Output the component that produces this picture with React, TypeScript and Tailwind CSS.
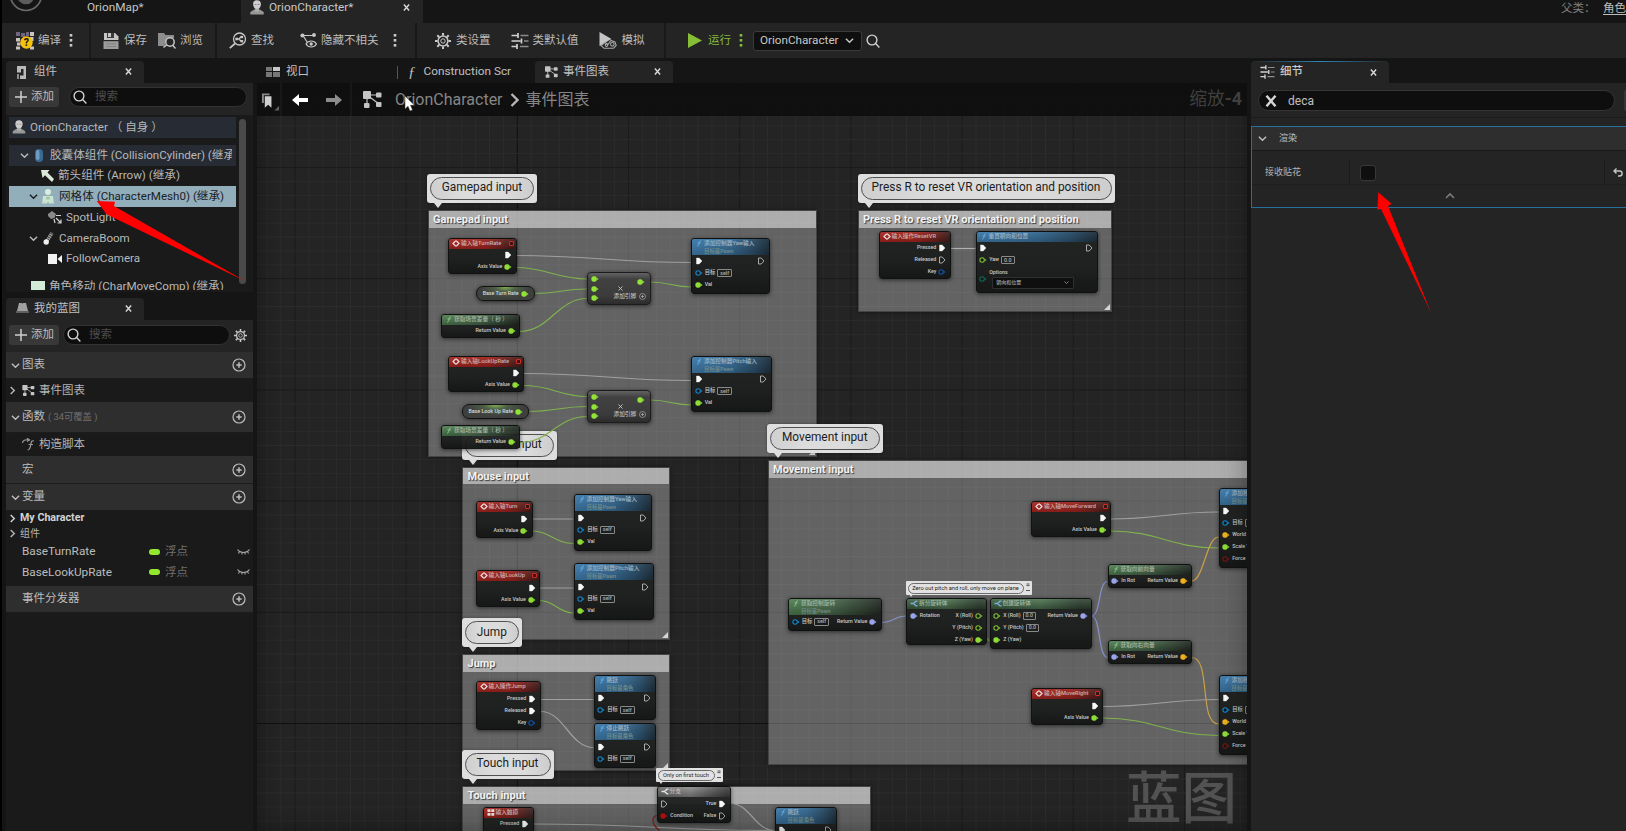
import React from "react";

const FONT = "font-[Roboto,'Noto_Sans_CJK_SC',sans-serif]";

/* ---------- icons ---------- */

type IconProps = { className?: string };

const Close = ({ className = "size-[7px]" }: IconProps) => (
  <svg viewBox="0 0 8 8" className={className} fill="none" stroke="#d6d6d6" strokeWidth="1.6">
    <path d="M1 .5l6 7M7 .5L1 7.500" />
  </svg>
);

const Chevron = ({ className = "size-[9px]", dir = "down" }: IconProps & { dir?: "down" | "right" | "up" }) => (
  <svg viewBox="0 0 10 10" className={className} fill="none" stroke="currentColor" strokeWidth="1.6">
    {dir === "down" && <path d="M1 3l4 4 4-4" />}
    {dir === "right" && <path d="M3 1l4 4-4 4" />}
    {dir === "up" && <path d="M1 7l4-4 4 4" />}
  </svg>
);

const Search = ({ className = "size-[14px]" }: IconProps) => (
  <svg viewBox="0 0 14 14" className={className} fill="none" stroke="#d0d0d0" strokeWidth="1.4">
    <circle cx="6" cy="6" r="4.9" />
    <path d="M9.6 9.6l3.8 3.8" />
  </svg>
);

const Gear = ({ className = "size-4" }: IconProps) => (
  <svg viewBox="0 0 16 16" className={className} fill="none" stroke="#c8c8c8">
    <circle cx="8" cy="8" r="4.9" strokeWidth="1.5" />
    <circle cx="8" cy="8" r="2.2" strokeWidth="1" />
    <path
      strokeWidth="2"
      d="M8 0v2.6M8 13.4V16M0 8h2.6M13.4 8H16M2.3 2.3l1.9 1.9M11.8 11.8l1.9 1.9M2.3 13.7l1.9-1.9M11.8 4.2l1.9-1.9"
    />
  </svg>
);

const Person = ({ className = "w-[14px] h-[15px]" }: IconProps) => (
  <svg viewBox="0 0 14 15" className={className}>
    <path d="M7 .2c2.700 0 4 1.700 3.900 4C10.800 6.700 9.200 9.500 7 9.500S3.200 6.700 3.100 4.200C3 1.900 4.300.2 7 .2z" fill="#cdcdcd" />
    <path d="M.3 14.500V12l4-2.500h5.400l4 2.500v2.500z" fill="#989898" />
    <path d="M5.200 8.500h3.600v3H5.200z" fill="#b0b0b0" />
    <path d="M4.500 4h2v.9h-2zM7.500 4h2v.9h-2z" fill="#8a8a8a" />
  </svg>
);

const GraphIcon = ({ className = "w-[14px] h-[12px]" }: IconProps) => (
  <svg viewBox="0 0 19 17" className={className} fill="#c4c4c4">
    <path d="M4 4l12 9M4 4h12M4 4v10" stroke="#c4c4c4" strokeWidth="1.2" />
    <rect x="0" y="0" width="8" height="8" rx="1" />
    <rect x="13" y="1.500" width="5.500" height="5" rx="1" />
    <rect x="1" y="12" width="5.500" height="5" rx="1" />
    <rect x="13" y="11" width="5.500" height="5" rx="1" />
  </svg>
);

const Sliders = ({ className = "w-[18px] h-4" }: IconProps) => (
  <svg viewBox="0 0 18 16" className={className} fill="none" stroke="#cfcfcf">
    <path strokeWidth="1.700" d="M.5 2.500h6M.5 8h9M.5 13.500h5M7 0v5M10.500 5.500v5M6 11v5" />
    <path strokeWidth="1.300" stroke="#8b8b8b" d="M9.500 2.500h8M13 8h4.500M9 13.500h8.500" />
  </svg>
);

const Dots = ({ className = "text-[#c8c8c8]" }: IconProps) => (
  <svg viewBox="0 0 4 13" className={`h-[13px] w-1 ${className}`} fill="currentColor">
    <rect x="0.700" y="0" width="2.600" height="2.600" />
    <rect x="0.700" y="5" width="2.600" height="2.600" />
    <rect x="0.700" y="10" width="2.600" height="2.600" />
  </svg>
);

const PlusCircle = ({ className = "size-[14px]" }: IconProps) => (
  <svg viewBox="0 0 14 14" className={className} fill="none" stroke="#bdbdbd" strokeWidth="1.200">
    <circle cx="7" cy="7" r="6" />
    <path d="M7 4.300v5.400M4.300 7h5.400" strokeWidth="1.500" />
  </svg>
);

const CompileIcon = () => (
  <svg viewBox="0 0 18 18" className="size-[18px]">
    <g fill="#6f6580">
      <rect x="0" y="0" width="4" height="4" />
      <rect x="5" y="1" width="4" height="4" />
      <rect x="10" y="0" width="3" height="4" />
    </g>
    <g fill="#c9c4bd">
      <rect x="14" y="0" width="4" height="4" />
      <rect x="14" y="5" width="3.500" height="4" />
      <rect x="0" y="6" width="4" height="3.500" />
      <rect x="1" y="10.500" width="3.500" height="3" />
      <rect x="0" y="14.500" width="4" height="3" />
      <rect x="14" y="14.500" width="4" height="3" />
    </g>
    <circle cx="10.500" cy="10.500" r="6.200" fill="#f4c20f" />
    <text x="10.500" y="14.300" textAnchor="middle" fontSize="10.500" fontWeight="800" fontFamily="Roboto, sans-serif" fill="#1c1600">
      ?
    </text>
  </svg>
);

const SaveIcon = () => (
  <svg viewBox="0 0 16 16" className="size-4">
    <path d="M1 0h11l3.500 3.500V7H1z" fill="#c4c4c4" />
    <path d="M4 0h7v5H4z" fill="#3a3a3a" />
    <path d="M5 0h3v4H5z" fill="#c4c4c4" />
    <path d="M.5 8.200h15V16H.5z" fill="#9c9c9c" />
    <path d="M3 10.500h10v.8H3zM3 13h10v.8H3z" fill="#7a7a7a" />
  </svg>
);

const BrowseIcon = () => (
  <svg viewBox="0 0 18 17" className="h-[17px] w-[18px]">
    <path d="M0 1h6l1.500 2H16v3H9L6.500 14H0z" fill="#8d8d8d" />
    <circle cx="12" cy="10" r="4.200" fill="#242424" stroke="#c4c4c4" strokeWidth="1.500" />
    <path d="M14.500 13l3 3.500M8.800 12.600L5.500 15.500" stroke="#c4c4c4" strokeWidth="1.500" />
  </svg>
);

const FindIcon = () => (
  <svg viewBox="0 0 18 17" className="h-[17px] w-[18px]" fill="none" stroke="#c8c8c8" strokeWidth="1.300">
    <circle cx="10.500" cy="7" r="6" />
    <path d="M6 11.500L.8 16.200" strokeWidth="1.700" />
    <path d="M8 7h2l2-2.200M10 7l2 2.300" />
    <g fill="#c8c8c8" stroke="none">
      <rect x="6.300" y="5.700" width="2.600" height="2.600" />
      <rect x="11.500" y="3.800" width="2.600" height="2.400" />
      <rect x="11.500" y="8" width="2.600" height="2.400" />
    </g>
  </svg>
);

const HideIcon = () => (
  <svg viewBox="0 0 17 15" className="h-[15px] w-[17px]" fill="none" stroke="#c8c8c8" strokeWidth="1.200">
    <path d="M3 2.500h11M4 4l3 5" />
    <circle cx="2.500" cy="2.500" r="2.100" fill="#c8c8c8" stroke="none" />
    <circle cx="14" cy="2" r="1.900" fill="#c8c8c8" stroke="none" />
    <path d="M6 11c2.500-4 8-4 10.500 0-2.500 4-8 4-10.500 0z" />
    <circle cx="11.200" cy="11" r="1.700" fill="#c8c8c8" stroke="none" />
  </svg>
);

const SimulateIcon = () => (
  <svg viewBox="0 0 18 17" className="h-[17px] w-[18px]">
    <path d="M.5 0l12 7-12 7z" fill="#c4c4c4" />
    <g fill="#242424" stroke="#a8a8a8" strokeWidth="1.100">
      <path d="M2 13.500l4-3 3 2 3-4 4 1.500 1.200 3.500-2.700 2.800H5z" />
      <circle cx="13.300" cy="12.300" r="1.800" />
      <circle cx="7.500" cy="13.300" r="1.200" />
    </g>
  </svg>
);

const FuncIcon = ({ className = "text-[17px]" }: IconProps) => (
  <span className={`font-['Liberation_Serif',serif] italic leading-none ${className}`}>ƒ</span>
);

/* ---------- top bars ---------- */

function TabBar() {
  return (
    <div className="flex h-[23px] shrink-0 overflow-hidden bg-[#151515]">
      <div className="flex w-[239px]">
        <svg viewBox="0 0 34 12" className="ml-[7px] h-3 w-[34px]" fill="none">
          <circle cx="17" cy="-5" r="15.500" stroke="#6a6a6a" strokeWidth="1.700" />
          <path d="M8-2c2 5 8 7 9 6 3 1 7-2 8-6z" fill="#5d5d5d" />
        </svg>
        <span className="ml-[44px] text-[11.800px] leading-[14px] text-[#c4c4c4]">OrionMap*</span>
      </div>
      <div className="flex w-[182px] items-start bg-[#242424]">
        <Person className="ml-[9px] mt-0 h-[15px] w-[14px]" />
        <span className="ml-[5px] text-[11.800px] leading-[14px] text-[#c8c8c8]">OrionCharacter*</span>
        <Close className="ml-auto mr-[13px] mt-[4px] size-[7px]" />
      </div>
      <div className="ml-auto flex gap-[11px] text-[11.5px] leading-[16px] text-[#808080]">
        <span className="w-[31px] whitespace-nowrap">父类：</span>
        <span className="w-[23px] whitespace-nowrap text-[#bdbdbd] underline underline-offset-2">角色</span>
      </div>
    </div>
  );
}

const Sep = () => <div className="h-full w-[2px] shrink-0 bg-[#191919]" />;

function Tool({ icon, label, className }: { icon: React.ReactNode; label: string; className: string }) {
  return (
    <div className={`flex shrink-0 items-center ${className}`}>
      {icon}
      <span className="whitespace-nowrap">{label}</span>
    </div>
  );
}

function Toolbar() {
  return (
    <div className="flex h-[35px] shrink-0 items-center bg-[#242424] text-[11.5px] text-[#bcbcbc]">
      <div className="flex h-full w-[87px] items-center">
        <Tool className="ml-[14px] gap-1" icon={<CompileIcon />} label="编译" />
        <Dots className="ml-[8px] text-[#c8c8c8]" />
      </div>
      <Sep />
      <div className="flex h-full w-[124px] items-center">
        <Tool className="ml-[12px] gap-[5px]" icon={<SaveIcon />} label="保存" />
        <Tool className="ml-[11px] gap-1" icon={<BrowseIcon />} label="浏览" />
      </div>
      <Sep />
      <div className="flex h-full w-[198px] items-center">
        <Tool className="ml-[12px] gap-[4px]" icon={<FindIcon />} label="查找" />
        <Tool className="ml-[26px] gap-[4px]" icon={<HideIcon />} label="隐藏不相关" />
        <Dots className="ml-[14px] text-[#c8c8c8]" />
      </div>
      <Sep />
      <div className="flex h-full w-[247px] items-center">
        <Tool className="ml-[18px] gap-[5px]" icon={<Gear />} label="类设置" />
        <Tool className="ml-[20px] gap-1" icon={<Sliders />} label="类默认值" />
        <Tool className="ml-[20px] gap-[5px]" icon={<SimulateIcon />} label="模拟" />
      </div>
      <Sep />
      <div className="flex h-full items-center">
        <svg viewBox="0 0 14 15" className="ml-[22px] h-[15px] w-[14px]">
          <path d="M0 0l14 7.500L0 15z" fill="#86bf36" />
        </svg>
        <span className="ml-[6px] text-[#86b83c]">运行</span>
        <Dots className="ml-[8px] text-[#86b83c]" />
        <div className="ml-[10px] flex h-[20px] w-[109px] items-center rounded-[3px] border border-[#3b3b3b] bg-[#0f0f0f] pl-[6px] text-[11.700px] text-[#c8c8c8]">
          OrionCharacter
          <Chevron className="ml-auto mr-[7px] size-[9px]" />
        </div>
        <Search className="ml-[4px] size-[14px]" />
      </div>
    </div>
  );
}

/* ---------- left column ---------- */

function PanelTab({ icon, label }: { icon: React.ReactNode; label: string }) {
  return (
    <div className="flex h-[22px] w-[138px] shrink-0 items-center rounded-t bg-[#242424] text-[11.5px] text-[#c0c0c0]">
      <span className="ml-[9px] flex w-[14px] justify-center">{icon}</span>
      <span className="ml-[5px]">{label}</span>
      <Close className="mb-px ml-auto mr-[12px] size-[7px]" />
    </div>
  );
}

function AddButton() {
  return (
    <div className="flex h-5 w-[50px] shrink-0 items-center rounded-[3px] bg-[#383838] text-[11.5px] text-[#bdbdbd]">
      <svg viewBox="0 0 12 12" className="ml-[6px] mr-1 size-[12px]" stroke="#cfcfcf" strokeWidth="1.500">
        <path d="M6 0v12M0 6h12" />
      </svg>
      添加
    </div>
  );
}

function SearchBox({ className }: IconProps) {
  return (
    <div className={`flex h-5 items-center rounded-full border border-[#323232] bg-[#0e0e0e] text-[11.5px] text-[#4c4c4c] ${className}`}>
      <Search className="ml-[3px] mr-[8px] size-[14px]" />
      搜索
    </div>
  );
}

function TreeRow({
  pad,
  arrow,
  icon,
  label,
  tone = "text-[#b8b8b8]",
}: {
  pad: string;
  arrow?: boolean;
  icon: React.ReactNode;
  label: string;
  tone?: string;
}) {
  return (
    <div className={`flex h-[20.8px] shrink-0 items-center overflow-hidden whitespace-nowrap text-[11.600px] ${pad} ${tone}`}>
      {arrow && <Chevron className="mr-[3px] size-[9px] shrink-0" />}
      <span className="mr-[4px] flex w-[14px] shrink-0 justify-center">{icon}</span>
      <span className="overflow-hidden">{label}</span>
    </div>
  );
}

const CapsuleIcon = () => (
  <svg viewBox="0 0 8 13" className="h-[13px] w-2">
    <rect x="0" y="0" width="8" height="13" rx="4" fill="#3a6991" />
    <rect x="1" y="1" width="3.500" height="10" rx="1.700" fill="#6b9cc2" />
  </svg>
);
const ArrowIcon = () => (
  <svg viewBox="0 0 13 12" className="h-3 w-[13px]">
    <path d="M0 0h8.500L6.500 2.500l6.500 6.500L11 12 4 5.300 1.500 8z" fill="#dbe8da" />
  </svg>
);
const SkeletonIcon = () => (
  <svg viewBox="0 0 12 15" className="h-[15px] w-3">
    <path d="M6 0c2 0 3 1.300 3 2.900S8 6 6 6 3 4.500 3 2.900 4 0 6 0z" fill="#d9eedd" />
    <path d="M1 7h10l.8 7.500H9.600L9.300 10v4.500H7l-1-2.500-1 2.500H2.700V10l-.3 4.500H.2z" fill="#cbe5d1" />
    <path d="M4 8.500h4M4 10h4" stroke="#86a79a" strokeWidth=".7" />
  </svg>
);
const SpotIcon = () => (
  <svg viewBox="0 0 14 13" className="h-[13px] w-[14px]">
    <path d="M0 3l4-3 4 3-1.500 4L3 8 0 5z" fill="#8a8a8a" />
    <path d="M8 4.500h5M6 8l1 4M8 7l5 5M13 8.500V12h-3.500" stroke="#d0d0d0" strokeWidth="1.200" fill="none" />
  </svg>
);
const BoomIcon = () => (
  <svg viewBox="0 0 11 13" className="h-[13px] w-[11px]">
    <path d="M4 9L9 1" stroke="#a6a6a6" strokeWidth="3.600" strokeDasharray="1.500 .7" />
    <circle cx="3.200" cy="10" r="2.700" fill="#f0f0f0" />
  </svg>
);
const CameraIcon = () => (
  <svg viewBox="0 0 14 10" className="h-[10px] w-[14px]" fill="#f2f2f2">
    <rect width="9" height="10" />
    <path d="M9.500 5L14 1v8z" />
  </svg>
);

function ComponentsPanel() {
  return (
    <div className="flex h-[234px] shrink-0 flex-col pt-[3px]">
      <PanelTab
        label="组件"
        icon={
          <svg viewBox="0 0 10 13" className="h-[13px] w-[10px]" fill="none">
            <path d="M0 0h9v13H3V9.500h3.500V3H4v3.500H0z" fill="#b9b9b9" />
            <path d="M0 8h2v5H0z" fill="#8d8d8d" />
          </svg>
        }
      />
      <div className="flex h-[32px] shrink-0 items-center bg-[#242424] pb-[4px] pl-[3px]">
        <AddButton />
        <SearchBox className="ml-[10px] w-[178px]" />
      </div>
      <div className="flex h-[177px] bg-[#1a1a1a] pl-[3px]">
        <div className="flex h-[175px] w-[227px] flex-col overflow-hidden pt-[2px]">
          <div className="bg-[#272c34]">
            <TreeRow pad="pl-[3px]" icon={<Person className="h-[14px] w-[14px]" />} label="OrionCharacter （ 自身 ）" />
          </div>
          <div className="mt-[7px] bg-[#272c34]">
            <TreeRow pad="pl-[11px] pr-[4px]" arrow icon={<CapsuleIcon />} label="胶囊体组件 (CollisionCylinder) (继承)" />
          </div>
          <TreeRow pad="pl-[31px]" icon={<ArrowIcon />} label="箭头组件 (Arrow) (继承)" />
          <div className="bg-[#93aebb]">
            <TreeRow pad="pl-[20px]" arrow icon={<SkeletonIcon />} label="网格体 (CharacterMesh0) (继承)" tone="text-[#1b2024]" />
          </div>
          <TreeRow pad="pl-[39px]" icon={<SpotIcon />} label="SpotLight" />
          <TreeRow pad="pl-[20px]" arrow icon={<BoomIcon />} label="CameraBoom" />
          <TreeRow pad="pl-[39px]" icon={<CameraIcon />} label="FollowCamera" />
          <div className="mt-[7px]">
            <TreeRow pad="pl-[22px]" icon={<span className="h-[11px] w-[14px] bg-[#d3ecd8]" />} label="角色移动 (CharMoveComp) (继承)" />
          </div>
        </div>
        <div className="ml-[3px] mt-1 h-[165px] w-[7px] rounded-full bg-[#4a4a4a]" />
      </div>
    </div>
  );
}

function Section({ h, label, note, open = true }: { h: string; label: string; note?: string; open?: boolean }) {
  return (
    <div className={`flex shrink-0 items-center border-b border-[#1c1c1c] bg-[#2e2e2e] pl-[5px] pr-[7px] text-[11.5px] text-[#bcbcbc] ${h}`}>
      <span className="w-[11px]">{open && <Chevron className="size-[9px]" />}</span>
      {label}
      {note && <span className="ml-[3px] text-[9.300px] text-[#6f6f6f]">{note}</span>}
      <PlusCircle className="ml-auto size-[14px]" />
    </div>
  );
}

function VariableRow({ name }: { name: string }) {
  return (
    <div className="flex h-[20.6px] shrink-0 items-center pl-[16px] pr-[3px] text-[11.800px] text-[#bcbcbc]">
      <span className="w-[127px]">{name}</span>
      <span className="h-[6px] w-[11px] rounded-[3px] bg-[#93e82f]" />
      <span className="ml-[5px] text-[11.5px] text-[#6f6f6f]">浮点</span>
      <svg viewBox="0 0 13 6" className="ml-auto h-[6px] w-[13px]" fill="none" stroke="#a4a4a4" strokeWidth="1.100">
        <path d="M.5.5c3 4 9 4 12 0M2.500 2.500L1.500 4.500M5 3.500v2M8 3.500v2M10.500 2.500l1 2" />
      </svg>
    </div>
  );
}

function BlueprintPanel() {
  return (
    <div className="flex grow flex-col bg-[#1a1a1a] text-[11.5px] text-[#b4b4b4]">
      <div className="shrink-0 bg-[#151515] pt-[6px]">
        <PanelTab
          label="我的蓝图"
          icon={
            <svg viewBox="0 0 13 11" className="mb-[3px] h-[11px] w-[13px]">
              <path d="M1 9l2-8h3l.5 1L7 1h3l2 8z" fill="#a0a0a0" />
              <path d="M0 9h13v2H0z" fill="#5e5e5e" />
            </svg>
          }
        />
      </div>
      <div className="flex h-[32px] shrink-0 items-center bg-[#242424] pb-[2px] pl-[3px]">
        <AddButton />
        <SearchBox className="ml-1 w-[167px]" />
        <Gear className="ml-[4px] size-[13px]" />
      </div>
      <Section h="h-[27px]" label="图表" />
      <div className="flex h-[23px] shrink-0 items-center pl-[2px]">
        <Chevron dir="right" className="mr-[5px] size-[9px]" />
        <GraphIcon className="mr-1 h-[11px] w-[13px]" />
        事件图表
      </div>
      <Section h="h-[31px]" label="函数" note="( 34可覆盖 )" />
      <div className="flex h-[23px] shrink-0 items-center pl-[16px]">
        <svg viewBox="0 0 13 13" className="mr-1 h-[13px] w-[13px]" fill="none" stroke="#9a9a9a" strokeWidth="1.200">
          <path d="M.5 5C1 2 3 1.500 6 1.800M5 .2l2.500 1.700L5 3.500M12 3c-2-.8-2.800.5-3.100 3-.4 3.500-.8 6-3.400 6M6.500 6.500h4.500" />
        </svg>
        构造脚本
      </div>
      <Section h="h-[28px]" label="宏" open={false} />
      <Section h="h-[27px]" label="变量" />
      <div className="flex h-[15px] shrink-0 items-center pl-[2px] text-[10.700px] font-bold text-[#d2d2d2]">
        <Chevron dir="right" className="mr-[3px] size-[9px]" />
        My Character
      </div>
      <div className="flex h-[15.500px] shrink-0 items-center pl-[2px] text-[10px]">
        <Chevron dir="right" className="mr-[3px] size-[9px]" />
        组件
      </div>
      <VariableRow name="BaseTurnRate" />
      <VariableRow name="BaseLookUpRate" />
      <div className="mt-[3px] flex flex-col">
        <Section h="h-[27px]" label="事件分发器" open={false} />
      </div>
    </div>
  );
}

/* ---------- graph ---------- */

const OX = 257.5;
const OY = 83.6;
const at = (x: number, y: number, w?: number, h?: number): React.CSSProperties => ({
  left: x - OX,
  top: y - OY,
  width: w,
  height: h,
});

type Pin = "exec" | "execOpen" | "green" | "greenOpen" | "blueOpen" | "keyOpen" | "tealOpen" | "violet" | "gold" | "red" | "redOpen";
const PIN_COLOR: Record<Pin, string> = {
  exec: "#ffffff",
  execOpen: "#d0d0d0",
  green: "#92e337",
  greenOpen: "#84c832",
  blueOpen: "#0f8bd6",
  keyOpen: "#0d55b0",
  tealOpen: "#0d6b5c",
  violet: "#9ca8f2",
  gold: "#f5b51d",
  red: "#b00d0d",
  redOpen: "#7a1212",
};

function PinIcon({ kind }: { kind: Pin }) {
  const c = PIN_COLOR[kind];
  const open = kind.endsWith("Open");
  return (
    <svg viewBox="0 0 8 8" className="size-2 shrink-0">
      {kind.startsWith("exec") ? (
        <path d="M1.500 1h2.700L7 4 4.200 7H1.500z" fill={open ? "none" : c} stroke={c} strokeWidth={open ? 0.8 : 0.4} strokeLinejoin="round" />
      ) : (
        <>
          <circle cx="3.100" cy="4" r={open ? 2.2 : 2.7} fill={open ? "#101310" : c} stroke={c} strokeWidth={open ? 1.1 : 0.2} />
          <path d="M5.800 2.800L7.500 4 5.800 5.200z" fill={c} />
        </>
      )}
    </svg>
  );
}

type Row = { l?: Pin; lt?: string; box?: string; r?: Pin; rt?: string };
type NodeKind = "event" | "touch" | "func" | "pure" | "struct" | "branch";
type NodeData = {
  k: NodeKind;
  x: number;
  y: number;
  w: number;
  h: number;
  t: string;
  sub?: string;
  mark?: boolean;
  rows: Row[];
  select?: string;
};

const self: Row = { l: "blueOpen", lt: "目标", box: "self" };
const axisRows: Row[] = [{ r: "exec" }, { rt: "Axis Value", r: "green" }];
const pawnRows: Row[] = [{ l: "exec", r: "execOpen" }, self, { l: "green", lt: "Val" }];
const jumpRows: Row[] = [{ l: "exec", r: "execOpen" }, self];
const moveRows: Row[] = [
  { l: "exec" },
  self,
  { l: "gold", lt: "World Direction" },
  { l: "green", lt: "Scale Value" },
  { l: "redOpen", lt: "Force" },
];

const NODES: NodeData[] = [
  { k: "event", x: 448.5, y: 238.5, w: 68.5, h: 36.5, t: "输入轴TurnRate", mark: true, rows: axisRows },
  { k: "pure", x: 441.5, y: 314.5, w: 79, h: 24.5, t: "获取场景差量（ 秒 ）", rows: [{ rt: "Return Value", r: "green" }] },
  { k: "func", x: 691.5, y: 238.5, w: 78.5, h: 56.5, t: "添加控制器Yaw输入", sub: "目标是Pawn", rows: pawnRows },
  { k: "event", x: 448.5, y: 356.5, w: 76, h: 36.5, t: "输入轴LookUpRate", mark: true, rows: axisRows },
  { k: "pure", x: 441.5, y: 425.5, w: 79, h: 24.5, t: "获取场景差量（ 秒 ）", rows: [{ rt: "Return Value", r: "green" }] },
  { k: "func", x: 691.5, y: 356.5, w: 80.5, h: 56.5, t: "添加控制器Pitch输入", sub: "目标是Pawn", rows: pawnRows },
  {
    k: "event", x: 879, y: 231.5, w: 72, h: 48.5, t: "输入操作ResetVR",
    rows: [{ rt: "Pressed", r: "exec" }, { rt: "Released", r: "execOpen" }, { rt: "Key", r: "keyOpen" }],
  },
  {
    k: "func", x: 976, y: 231.5, w: 122, h: 62.5, t: "重置朝向和位置", select: "朝向和位置",
    rows: [{ l: "exec", r: "execOpen" }, { l: "greenOpen", lt: "Yaw", box: "0.0" }],
  },
  { k: "event", x: 476, y: 502, w: 57, h: 36.5, t: "输入轴Turn", mark: true, rows: axisRows },
  { k: "func", x: 574, y: 495, w: 78, h: 56.5, t: "添加控制器Yaw输入", sub: "目标是Pawn", rows: pawnRows },
  { k: "event", x: 476, y: 571, w: 64.5, h: 36.5, t: "输入轴LookUp", mark: true, rows: axisRows },
  { k: "func", x: 574, y: 564, w: 80, h: 56.5, t: "添加控制器Pitch输入", sub: "目标是Pawn", rows: pawnRows },
  {
    k: "event", x: 476, y: 682, w: 65, h: 48.5, t: "输入操作Jump",
    rows: [{ rt: "Pressed", r: "exec" }, { rt: "Released", r: "exec" }, { rt: "Key", r: "keyOpen" }],
  },
  { k: "func", x: 594, y: 675.5, w: 62, h: 45, t: "跳跃", sub: "目标是角色", rows: jumpRows },
  { k: "func", x: 594, y: 724, w: 62, h: 45, t: "停止跳跃", sub: "目标是角色", rows: jumpRows },
  {
    k: "branch", x: 657, y: 787, w: 74, h: 36.5, t: "分支",
    rows: [{ l: "execOpen", rt: "True", r: "exec" }, { l: "red", lt: "Condition", rt: "False", r: "execOpen" }],
  },
  { k: "touch", x: 483, y: 807.5, w: 51, h: 60, t: "输入触摸", rows: [{ rt: "Pressed", r: "exec" }] },
  { k: "func", x: 775, y: 807.5, w: 62, h: 45, t: "跳跃", sub: "目标是角色", rows: jumpRows },
  { k: "event", x: 1031.5, y: 501.5, w: 80, h: 36.5, t: "输入轴MoveForward", mark: true, rows: axisRows },
  { k: "event", x: 1031.5, y: 689, w: 72, h: 36.5, t: "输入轴MoveRight", mark: true, rows: axisRows },
  { k: "func", x: 1219, y: 488.5, w: 90, h: 80, t: "添加移动输入", sub: "目标是Pawn", rows: moveRows },
  { k: "func", x: 1219, y: 675.5, w: 90, h: 80, t: "添加移动输入", sub: "目标是Pawn", rows: moveRows },
  { k: "pure", x: 1108, y: 564.5, w: 84.5, h: 24.5, t: "获取向前向量", rows: [{ l: "violet", lt: "In Rot", rt: "Return Value", r: "gold" }] },
  { k: "pure", x: 1108, y: 640.5, w: 84.5, h: 24.5, t: "获取向右向量", rows: [{ l: "violet", lt: "In Rot", rt: "Return Value", r: "gold" }] },
  {
    k: "pure", x: 788.5, y: 599, w: 93.5, h: 33, t: "获取控制旋转", sub: "目标是Pawn",
    rows: [{ ...self, rt: "Return Value", r: "violet" }],
  },
  {
    k: "struct", x: 906.5, y: 599, w: 81, h: 47, t: "拆分旋转体",
    rows: [{ l: "violet", lt: "Rotation", rt: "X (Roll)", r: "greenOpen" }, { rt: "Y (Pitch)", r: "greenOpen" }, { rt: "Z (Yaw)", r: "green" }],
  },
  {
    k: "struct", x: 990, y: 599, w: 102.5, h: 50.5, t: "创建旋转体",
    rows: [
      { l: "greenOpen", lt: "X (Roll)", box: "0.0", rt: "Return Value", r: "violet" },
      { l: "greenOpen", lt: "Y (Pitch)", box: "0.0" },
      { l: "green", lt: "Z (Yaw)" },
    ],
  },
];

const HEADER: Record<NodeKind, string> = {
  event: "bg-[linear-gradient(180deg,rgba(255,255,255,0.08),rgba(0,0,0,0.2)),linear-gradient(90deg,#ad211b_0%,#a01d18_55%,#6a1b17_80%,#3a1816_100%)]",
  touch: "bg-[linear-gradient(180deg,rgba(255,255,255,0.08),rgba(0,0,0,0.2)),linear-gradient(90deg,#ad211b_0%,#8a1f19_50%,#33201e_100%)]",
  func: "bg-[linear-gradient(180deg,rgba(255,255,255,0.05),rgba(0,0,0,0.18)),linear-gradient(90deg,#3c7caf_0%,#336a95_50%,#264c69_78%,#1a2c39_100%)]",
  pure: "bg-[linear-gradient(180deg,rgba(255,255,255,0.1),rgba(0,0,0,0.25)),linear-gradient(90deg,#4c7f4e_0%,#45684a_45%,#2b3e2d_80%,#1c241d_100%)]",
  struct: "bg-[linear-gradient(180deg,rgba(255,255,255,0.1),rgba(0,0,0,0.3)),linear-gradient(90deg,#3b6340_0%,#4c7550_50%,#2e422f_90%)]",
  branch: "bg-[linear-gradient(180deg,rgba(255,255,255,0.1),rgba(0,0,0,0.3)),linear-gradient(90deg,#6a6a6a_0%,#8a8a8a_45%,#3c3c3c_95%)]",
};

const TITLE: Record<NodeKind, string> = {
  event: "text-[#cdb5b1]",
  touch: "text-[#cdb5b1]",
  func: "text-[#a3bac8]",
  pure: "text-[#a6bba5]",
  struct: "text-[#a6bba5]",
  branch: "text-[#c4c4c4]",
};

function HeaderIcon({ k }: { k: NodeKind }) {
  if (k === "event")
    return (
      <svg viewBox="0 0 8 7" className="h-[7px] w-2" fill="none" stroke="#f0e4e2" strokeWidth="1.200">
        <path d="M3.500 1L1 3.500 3.500 6M4.500 1L7 3.500 4.500 6M3 1h2M3 6h2" />
      </svg>
    );
  if (k === "touch")
    return (
      <svg viewBox="0 0 8 7" className="h-[7px] w-2" fill="#f0e4e2">
        <path d="M.5.3h3v2.800h-3zM4.300.3h3v2.800h-3zM.5 3.900h3v2.800h-3zM4.300 3.900h3v2.800h-3z" />
      </svg>
    );
  if (k === "struct" || k === "branch")
    return (
      <svg viewBox="0 0 8 7" className="h-[7px] w-2" fill="none" stroke={k === "struct" ? "#7fb0e6" : "#e8e8e8"} strokeWidth="1.300">
        <path d="M.5 3.500h3L6 1.200h1.500M3.500 3.500L6 5.800h1.500" />
      </svg>
    );
  return (
    <svg viewBox="0 0 8 7" className="h-[7px] w-2" fill="none" stroke={k === "pure" ? "#93d08e" : "#6cb6ee"} strokeWidth="0.900">
      <path d="M6 1c-1.500-.4-1.700.8-2 2.500S3.300 6.200 2 6M2.500 3h3" />
    </svg>
  );
}

function GraphNode({ n }: { n: NodeData }) {
  return (
    <div
      className="absolute overflow-hidden rounded-[3px] border border-[#0c0e0d] bg-[linear-gradient(180deg,#1f221f_0%,#1b1e1c_60%,#121413_100%)] opacity-95 shadow-[0_1px_4px_rgba(0,0,0,0.6)]"
      style={at(n.x, n.y, n.w, n.h)}
    >
      <div className={`flex gap-px pl-[3px] ${n.sub ? "h-[16px]" : "h-[10px]"} ${HEADER[n.k]}`}>
        <span className="mt-[1px] shrink-0">
          <HeaderIcon k={n.k} />
        </span>
        <div className="whitespace-nowrap text-[5.700px] font-medium leading-[9px]">
          <div className={TITLE[n.k]}>{n.t}</div>
          {n.sub && <div className="text-[5.400px] leading-[6px] text-[#76938f]">{n.sub}</div>}
        </div>
        {n.mark && <span className="ml-auto mr-[2px] mt-[2px] size-[5px] shrink-0 rounded-[1px] border border-[#d52a22] bg-[#3a0f0c]" />}
      </div>
      <div className="pl-[2.700px] pr-[3.200px] text-[5.300px] font-medium text-[#cfcfcf]">
        {n.rows.map((r, i) => (
          <div key={i} className="flex h-[12px] items-center whitespace-nowrap pt-[1px]">
            {r.l && <PinIcon kind={r.l} />}
            {r.lt && <span className="ml-[2px]">{r.lt}</span>}
            {r.box && <span className="ml-[2px] flex h-[8px] items-center rounded-[1px] border border-[#8c8c8c] px-[2px] leading-none text-[#b5b5b5]">{r.box}</span>}
            <span className="ml-auto mr-[2px]">{r.rt}</span>
            {r.r && <PinIcon kind={r.r} />}
          </div>
        ))}
        {n.select && (
          <div className="flex">
            <div className="pt-[9px]">
              <PinIcon kind="tealOpen" />
            </div>
            <div className="ml-[2px] pt-[1px]">
              <div className="leading-[10px]">Options</div>
              <div className="ml-[3px] flex h-[12px] w-[82px] items-center rounded-[1px] border border-[#2d2d2d] bg-[#0b0b0b] pl-[3px] pr-[4px] text-[5px] text-[#a5a5a5]">
                {n.select}
                <Chevron className="ml-auto size-[5px]" />
              </div>
            </div>
          </div>
        )}
      </div>
    </div>
  );
}

function PillNode({ x, y, w, label }: { x: number; y: number; w: number; label: string }) {
  return (
    <div
      className="absolute flex items-center justify-end rounded-[7px] border border-[#111] bg-[radial-gradient(ellipse_at_50%_0%,#7fae52_0%,#4f5f47_25%,#3e403d_60%)] pr-[5px] text-[5.300px] font-medium text-[#dadada] shadow-[0_1px_4px_rgba(0,0,0,0.6)]"
      style={at(x, y, w, 15)}
    >
      <span className="mr-[2px] whitespace-nowrap">{label}</span>
      <PinIcon kind="green" />
    </div>
  );
}

function MultiplyNode({ x, y }: { x: number; y: number }) {
  return (
    <div
      className="absolute flex justify-between rounded-[4px] border border-[#1c1c1c] bg-[linear-gradient(180deg,#626262_0%,#414141_20%,#3b3b3b_75%,#2c2c2c_100%)] pl-[3px] pr-1 text-[5.600px] text-[#cfcfcf] shadow-[0_1px_4px_rgba(0,0,0,0.6)]"
      style={at(x, y, 64, 33)}
    >
      <div className="flex flex-col gap-[1.700px] pt-[1.500px]">
        <PinIcon kind="green" />
        <PinIcon kind="green" />
        <PinIcon kind="green" />
      </div>
      <div className="flex flex-col items-end">
        <div className="mr-px h-[10px] pt-[4.500px]">
          <PinIcon kind="green" />
        </div>
        <div className="mr-[23px] flex h-[8px] items-center pt-[2px]">
          <svg viewBox="0 0 5 5" className="size-[5px]" stroke="#c8c8c8" strokeWidth="0.900">
            <path d="M.5.5l4 4M4.500.5l-4 4" />
          </svg>
        </div>
        <div className="flex h-[10px] items-center gap-[3px] whitespace-nowrap">
          添加引脚
          <PlusCircle className="size-[7px]" />
        </div>
      </div>
    </div>
  );
}

type Box = { x: number; y: number; w: number; h: number; t: string; grip?: boolean };
const COMMENTS: Box[] = [
  { x: 428, y: 211, w: 389.5, h: 247, t: "Gamepad input", grip: true },
  { x: 858, y: 211, w: 254, h: 102, t: "Press R to reset VR orientation and position", grip: true },
  { x: 462.5, y: 467.5, w: 207.5, h: 173, t: "Mouse input", grip: true },
  { x: 462.5, y: 655, w: 207.5, h: 117, t: "Jump", grip: true },
  { x: 462.5, y: 787, w: 409, h: 80, t: "Touch input" },
  { x: 768, y: 461, w: 520, h: 304.5, t: "Movement input" },
];

function Comment({ c }: { c: Box }) {
  return (
    <div className="absolute border border-[#383838]/70 bg-white/29 shadow-[0_0_4px_rgba(0,0,0,0.5)]" style={at(c.x, c.y, c.w, c.h)}>
      <div className="flex h-[16.500px] items-center whitespace-nowrap bg-white/48 pl-[4.500px] pt-[2px] text-[11px] font-bold text-[#f2f2f2] [text-shadow:1px_1px_1px_#3a3a3a]">
        {c.t}
      </div>
      {c.grip && (
        <svg viewBox="0 0 6 6" className="absolute bottom-px right-px size-[6px]">
          <path d="M6 0v6H0z" fill="#d5d5d5" />
        </svg>
      )}
    </div>
  );
}

const BUBBLES: Omit<Box, "h">[] = [
  { x: 427.5, y: 174.5, w: 110, t: "Gamepad input" },
  { x: 858, y: 174.5, w: 257, t: "Press R to reset VR orientation and position" },
  { x: 462, y: 431.5, w: 95, t: "Mouse input" },
  { x: 767.5, y: 424.5, w: 115.5, t: "Movement input" },
  { x: 462, y: 619, w: 60.5, t: "Jump" },
  { x: 462, y: 750.5, w: 92, t: "Touch input" },
];

function Bubble({ b }: { b: Omit<Box, "h"> }) {
  return (
    <div className="absolute rounded-[3px] bg-[#dedede] p-[3px] shadow-[0_0_3px_rgba(0,0,0,0.4)]" style={at(b.x, b.y, b.w, 29)}>
      <div className="flex h-[23px] items-center justify-center whitespace-nowrap rounded-full border border-[#505050] bg-[linear-gradient(90deg,#cfcfcf,#dcdcdc_30%,#dcdcdc_70%,#cdcdcd)] pb-px text-[11.860px] text-[#1c1c1c]">
        {b.t}
      </div>
      <svg viewBox="0 0 8 5" className="absolute left-[7px] top-[29px] h-[5px] w-2">
        <path d="M0 0h8L4 5z" fill="#dedede" />
      </svg>
    </div>
  );
}

function SmallBubble({ x, y, w, t }: { x: number; y: number; w: number; t: string }) {
  return (
    <div className="absolute flex items-center rounded-[1px] bg-[#e2e2e2] pl-[1.500px]" style={at(x, y, w, 13.5)}>
      <div className="flex h-[11px] grow items-center justify-center whitespace-nowrap rounded-full border border-[#6b6b6b] text-[5.700px] text-[#222]">{t}</div>
      <svg viewBox="0 0 6 10" className="mx-px h-[10px] w-[6px]" stroke="#555" strokeWidth="1">
        <path d="M1.500 1h3M1.500 2.600h3M1 7.500h4" />
      </svg>
      <svg viewBox="0 0 4 3" className="absolute left-[3px] top-[13px] h-[3px] w-1">
        <path d="M0 0h4L2 3z" fill="#e2e2e2" />
      </svg>
    </div>
  );
}

const wire = (x1: number, y1: number, x2: number, y2: number, bend = 0.45) => {
  const d = Math.max(Math.abs(x2 - x1) * bend, 4);
  return `M${x1} ${y1}C${x1 + d} ${y1} ${x2 - d} ${y2} ${x2} ${y2}`;
};

const WIRES: { c: string; d: string }[] = [
  { c: "#a0a0a0", d: wire(516, 256, 692, 263) },
  { c: "#7fb24c", d: wire(516, 268, 588, 279.5) },
  { c: "#7fb24c", d: wire(534, 294, 588, 289.5) },
  { c: "#7fb24c", d: wire(520, 332, 588, 299) },
  { c: "#7fb24c", d: wire(651, 282.5, 692, 287.5) },
  { c: "#a0a0a0", d: wire(524, 374, 692, 381) },
  { c: "#7fb24c", d: wire(524, 386, 588, 397) },
  { c: "#7fb24c", d: wire(529, 412, 588, 407) },
  { c: "#7fb24c", d: wire(520, 443, 588, 417) },
  { c: "#7fb24c", d: wire(651, 400.5, 692, 405.5) },
  { c: "#b0b0b0", d: wire(951, 249, 976, 249) },
  { c: "#a0a0a0", d: wire(532, 519.5, 574, 519.5) },
  { c: "#7fb24c", d: wire(532, 531.5, 574, 544) },
  { c: "#a0a0a0", d: wire(540, 588.5, 574, 588.5) },
  { c: "#7fb24c", d: wire(540, 601, 574, 613.5) },
  { c: "#a0a0a0", d: wire(541, 700, 594, 700) },
  { c: "#a0a0a0", d: wire(541, 712, 594, 748) },
  { c: "#a0a0a0", d: wire(534, 824.5, 775, 831) },
  { c: "#a0a0a0", d: wire(731, 804, 775, 831) },
  { c: "#7d1c1c", d: "M657 816C651 818 653 826 660 831" },
  { c: "#a0a0a0", d: wire(1111, 519.5, 1219, 512.5) },
  { c: "#7fb24c", d: wire(1111, 531.5, 1219, 548.5) },
  { c: "#c9a046", d: wire(1192, 581.5, 1219, 537.5) },
  { c: "#a0a0a0", d: wire(1103, 707, 1219, 700) },
  { c: "#7fb24c", d: wire(1103, 718.5, 1219, 736) },
  { c: "#c9a046", d: wire(1192, 658, 1219, 724.5, 0.75) },
  { c: "#8791cc", d: wire(882, 623, 907, 616.5) },
  { c: "#7fb24c", d: wire(987, 639, 990, 641) },
  { c: "#8791cc", d: wire(1092, 616.5, 1108, 582, 0.6) },
  { c: "#8791cc", d: wire(1092, 616.5, 1108, 658, 0.6) },
];

const CELL = 13.9;
const VERTICALS = Array.from({ length: 72 }, (_, i) => ({ p: 517.3 + (i - 18) * CELL, n: i - 18 }));
const HORIZONTALS = Array.from({ length: 54 }, (_, i) => ({ p: 723.5 + (i - 46) * CELL, n: i - 46 }));
const lineColor = (n: number) => (n === 0 ? "#101010" : n % 8 === 0 ? "#1b1b1b" : "#2c2c2c");

function Grid() {
  return (
    <svg viewBox="257 83 990 748" className="absolute left-0 top-0 h-[748px] w-[990px]" strokeWidth="1">
      {VERTICALS.map(({ p, n }) => (
        <path key={`v${n}`} d={`M${p} 83V831`} stroke={lineColor(n)} />
      ))}
      {HORIZONTALS.map(({ p, n }) => (
        <path key={`h${n}`} d={`M257 ${p}H1247`} stroke={lineColor(n)} />
      ))}
    </svg>
  );
}

function GraphTabs() {
  return (
    <div className="flex h-[25px] shrink-0 items-end bg-[#151515] text-[11.5px] text-[#c0c0c0]">
      <div className="flex h-[22px] w-[140px] items-center border-transparent pl-[9px]">
        <svg viewBox="0 0 14 10" className="mr-[6px] h-[10px] w-[14px]">
          <path d="M0 0h6v4H0zM0 5h6v5H0zM7 5h7v5H7z" fill="#777" />
          <path d="M7 0h7v4H7z" fill="#c8c8c8" />
        </svg>
        视口
      </div>
      <div className="flex h-[22px] w-[138px] items-center">
        <span className="mr-[10px] h-[13px] w-px bg-[#555]" />
        <FuncIcon className="mr-[8px] text-[15px]" />
        <span className="whitespace-nowrap text-[11.800px]">Construction Scr</span>
      </div>
      <div className="flex h-[22px] w-[138px] items-center rounded-t bg-[#242424] pl-[10px]">
        <GraphIcon className="mr-[5px] h-[12px] w-[13px]" />
        事件图表
        <Close className="mb-px ml-auto mr-[12px] size-[7px]" />
      </div>
    </div>
  );
}

function GraphHeader() {
  return (
    <div className="relative flex h-[33px] items-center bg-[#0e0e0e]/92 text-[16px] text-[#868686]">
      <div className="flex h-full w-[25px] items-center border-r-2 border-[#181818]">
        <svg viewBox="0 0 20 19" className="ml-[4px] mt-[3px] h-[19px] w-5">
          <path d="M1 1h8v2H3v8H1z" fill="#8c8c8c" />
          <path d="M4 4h7v12l-3.500-3L4 16z" fill="#d0d0d0" />
          <path d="M19 14v5h-5z" fill="#5f5f5f" />
        </svg>
      </div>
      <div className="flex h-full w-[70px] items-center border-r-2 border-[#181818]">
        <svg viewBox="0 0 16 12" className="ml-[10px] h-3 w-4">
          <path d="M0 6l7-6v4h9v4H7v4z" fill="#ffffff" />
        </svg>
        <svg viewBox="0 0 16 12" className="ml-[18px] h-3 w-4">
          <path d="M16 6L9 0v4H0v4h9v4z" fill="#8d8d8d" />
        </svg>
      </div>
      <GraphIcon className="ml-[11px] h-[17px] w-[19px]" />
      <span className="ml-[13px]">OrionCharacter</span>
      <svg viewBox="0 0 9 14" className="mx-[7px] h-[14px] w-[9px]" fill="none" stroke="#b5b5b5" strokeWidth="2.400">
        <path d="M1.500 1l6 6-6 6" />
      </svg>
      <span>事件图表</span>
      <span className="ml-auto mr-[5px] text-[17.800px] text-[#3f3f3f]">
        缩放<b>-4</b>
      </span>
    </div>
  );
}

function Graph() {
  return (
    <div className="flex w-[990px] shrink-0 flex-col">
      <GraphTabs />
      <div className="relative h-[748px] overflow-hidden bg-[#242424]">
        <Grid />
        <div className="absolute bottom-0 right-[10px] text-[55.500px] font-medium leading-[62px] text-[#525252]">蓝图</div>
        {COMMENTS.map((c) => (
          <Comment key={c.t} c={c} />
        ))}
        {BUBBLES.map((b) => (
          <Bubble key={b.t} b={b} />
        ))}
        <svg viewBox="257.5 83.5 990 748" className="absolute left-0 top-0 h-[748px] w-[990px]" fill="none" strokeWidth="1.200">
          {WIRES.map((w) => (
            <path key={w.d} d={w.d} stroke={w.c} />
          ))}
        </svg>
        {NODES.map((n) => (
          <GraphNode key={`${n.x}-${n.y}`} n={n} />
        ))}
        <PillNode x={476} y={287} w={59} label="Base Turn Rate" />
        <PillNode x={462.5} y={405} w={67} label="Base Look Up Rate" />
        <MultiplyNode x={587.5} y={273} />
        <MultiplyNode x={587.5} y={391} />
        <SmallBubble x={656.5} y={769} w={66.5} t="Only on first touch" />
        <SmallBubble x={906.5} y={582} w={125.5} t="Zero out pitch and roll, only move on plane" />
        <div className="pointer-events-none absolute inset-0 shadow-[inset_0_0_26px_rgba(0,0,0,0.35)]" />
        <GraphHeader />
      </div>
    </div>
  );
}

/* ---------- details ---------- */

function Details() {
  return (
    <div className="flex grow flex-col overflow-hidden">
      <div className="flex h-[25px] shrink-0 items-end bg-[#151515]">
        <div className="flex h-[22px] w-[138px] flex-col overflow-hidden rounded-t bg-[#242424]">
          <div className="h-px shrink-0 bg-[linear-gradient(90deg,transparent,#2b86b8_50%,transparent)]" />
          <div className="flex grow items-center pb-px pl-[9px] text-[11.5px] font-medium text-[#c8c8c8]">
            <Sliders className="mr-[5px] h-[14px] w-[15px]" />
            细节
            <Close className="ml-auto mr-[12px] size-[7px]" />
          </div>
        </div>
      </div>
      <div className="flex grow flex-col bg-[#242424]">
        <div className="flex h-[35px] shrink-0 items-center border-b border-[#1b1b1b] pl-[7px] pt-px">
          <div className="flex h-[21px] w-[357px] shrink-0 items-center rounded-full border border-[#353535] bg-[#0e0e0e] text-[12px] text-[#c0c0c0]">
            <Close className="ml-[6px] mr-[11px] size-[12px]" />
            deca
          </div>
          <div className="ml-[9px] h-[21px] w-[10px] rounded-l border border-[#353535] bg-[#0e0e0e]" />
        </div>
        <div className="mt-[8px] flex h-[82px] w-[386px] shrink-0 flex-col border border-[#25719c]">
          <div className="flex h-[24px] shrink-0 items-center border-b border-[#191919] bg-[#2e2e2e] pl-[6px] text-[9px] text-[#c0c0c0]">
            <Chevron className="mr-[12px] size-[9px]" />
            渲染
          </div>
          <div className="flex h-[34px] shrink-0 items-end border-b border-[#1e1e1e] text-[9px] text-[#b4b4b4]">
            <div className="flex h-[23px] w-[98px] items-center border-r border-[#1a1a1a] pl-[13px]">接收贴花</div>
            <div className="flex h-[23px] w-[255px] items-center border-r border-[#1a1a1a] pl-[10px]">
              <span className="size-4 rounded-[3px] border border-[#383838] bg-[#0f0f0f]" />
            </div>
            <div className="flex h-[23px] items-center pl-[8px]">
              <svg viewBox="0 0 10 9" className="h-[9px] w-[10px]" fill="none" stroke="#c4c4c4" strokeWidth="1.400">
                <path d="M3.500.5L1 3l2.500 2.500M1 3h5.500c3.500 0 3.500 5 0 5H5" />
              </svg>
            </div>
          </div>
          <div className="flex grow items-center pl-[193px] text-[#7c7c7c]">
            <Chevron dir="up" className="size-[10px]" />
          </div>
        </div>
      </div>
    </div>
  );
}

export default function App() {
  return (
    <div className={`relative flex h-[831px] w-[1626px] overflow-hidden bg-black pl-[2px] leading-normal ${FONT}`}>
      <div className="flex grow flex-col overflow-hidden bg-[#151515]">
        <TabBar />
        <Toolbar />
        <div className="flex grow">
          <div className="ml-[4px] mr-[4px] flex w-[247px] shrink-0 flex-col">
            <ComponentsPanel />
            <BlueprintPanel />
          </div>
          <Graph />
          <div className="w-[4px] shrink-0 bg-[#151515]" />
          <Details />
        </div>
      </div>
      <svg viewBox="0 0 1626 831" className="pointer-events-none absolute left-0 top-0 h-[831px] w-[1626px]">
        <path d="M96.700 201L115 201.700 114 206 245 281 108.500 215.300 107.300 215.300z" fill="#fe0000" />
        <path d="M1378.300 192.300L1391.700 203.700 1388 206 1431 312.500 1381 209 1377.300 209.700z" fill="#fe0000" />
        <path d="M405 96v13l3-2.700 2 4.700 2.500-1.100-2-4.600h4z" fill="#fff" stroke="#333" strokeWidth="0.500" />
      </svg>
    </div>
  );
}
